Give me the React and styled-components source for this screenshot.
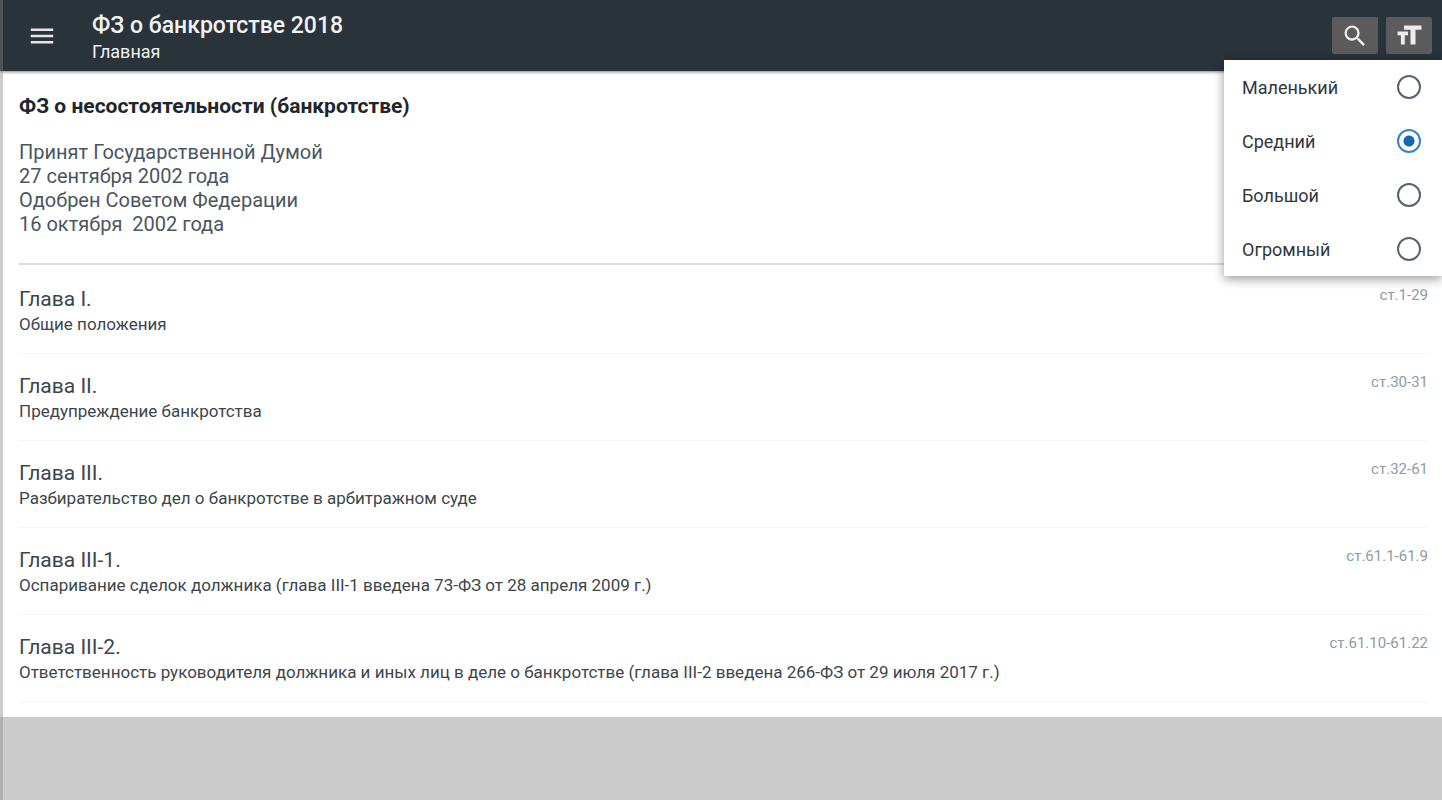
import React, { useState } from "react";
import styled, { createGlobalStyle } from "styled-components";
import { MdMenu, MdSearch } from "react-icons/md";

const GlobalStyle = createGlobalStyle`
  * {
    box-sizing: border-box;
  }
  body {
    margin: 0;
    background: #cbcbcb;
    font-family: Roboto, "Liberation Sans", sans-serif;
    color: #3d464b;
  }
`;

const Page = styled.div`
  position: relative;
  min-height: 100vh;
  &::before {
    content: "";
    position: absolute;
    z-index: 2;
    inset: 0 auto 0 0;
    width: 3px;
    background: rgba(130, 130, 130, 0.4);
  }
`;

const Header = styled.header`
  position: relative;
  z-index: 1;
  display: flex;
  align-items: center;
  height: 71px;
  padding: 0 10px 0 27px;
  background: #2a323a;
  color: #f2f2f2;
  box-shadow: 0 1px 3px rgba(0, 0, 0, 0.5);
`;

const MenuButton = styled.button`
  display: flex;
  padding: 0;
  margin-right: 35px;
  border: 0;
  background: none;
  color: #e6e6e6;
`;

const Titles = styled.div`
  flex: 1;
  padding-top: 4px;
`;

const Title = styled.h1`
  margin: 0;
  font-size: 23px;
  line-height: 28px;
  font-weight: 500;
`;

const Subtitle = styled.div`
  font-size: 18px;
  line-height: 24px;
`;

const Actions = styled.div`
  position: relative;
  display: flex;
  gap: 8px;
`;

const IconButton = styled.button`
  display: flex;
  align-items: center;
  justify-content: center;
  width: 46px;
  height: 37px;
  padding: 0;
  border: 0;
  border-radius: 2px;
  background: #5b5b5c;
  color: #ececec;
`;

const SizeMenu = styled.fieldset`
  position: absolute;
  top: 43px;
  right: -10px;
  width: 218px;
  margin: 0;
  padding: 0;
  border: 0;
  background: #fff;
  box-shadow: 0 3px 10px rgba(0, 0, 0, 0.4);
`;

const Option = styled.label`
  display: flex;
  align-items: center;
  justify-content: space-between;
  height: 54px;
  padding: 0 21px 0 18px;
  font-size: 18px;
  color: #30373b;
`;

const Radio = styled.input`
  appearance: none;
  width: 24px;
  height: 24px;
  margin: 0;
  border: 2px solid #58636a;
  border-radius: 50%;
  &:checked {
    border-color: #3a82c6;
    background: radial-gradient(circle, #1565b5 5px, #fff 6px);
  }
`;

const Content = styled.main`
  padding: 22px 14px 15px 19px;
  background: #fff;
`;

const DocTitle = styled.h2`
  margin: 0 0 21px;
  font-size: 21px;
  line-height: 26px;
  font-weight: 700;
  color: #20272b;
`;

const Intro = styled.p`
  margin: 0;
  padding-bottom: 27px;
  border-bottom: 2px solid #dcdcdc;
  font-size: 20px;
  line-height: 24px;
  white-space: pre-line;
  color: #4a565e;
`;

const Chapters = styled.ul`
  margin: 0;
  padding: 2px 0 0;
  list-style: none;
`;

const Chapter = styled.li`
  border-bottom: 1px solid #f4f4f4;
`;

const ChapterLink = styled.a`
  display: flex;
  justify-content: space-between;
  padding: 20px 0 17px;
  color: inherit;
  text-decoration: none;
`;

const ChapterName = styled.div`
  font-size: 21px;
  line-height: 25px;
`;

const ChapterText = styled.div`
  font-size: 17px;
  line-height: 24px;
`;

const Articles = styled.span`
  font-size: 15px;
  line-height: 16px;
  color: #8c9ba5;
`;

const sizes = ["Маленький", "Средний", "Большой", "Огромный"];

const chapters = [
  { name: "Глава I.", text: "Общие положения", articles: "ст.1-29" },
  { name: "Глава II.", text: "Предупреждение банкротства", articles: "ст.30-31" },
  {
    name: "Глава III.",
    text: "Разбирательство дел о банкротстве в арбитражном суде",
    articles: "ст.32-61",
  },
  {
    name: "Глава III-1.",
    text: "Оспаривание сделок должника (глава III-1 введена 73-ФЗ от 28 апреля 2009 г.)",
    articles: "ст.61.1-61.9",
  },
  {
    name: "Глава III-2.",
    text: "Ответственность руководителя должника и иных лиц в деле о банкротстве (глава III-2 введена 266-ФЗ от 29 июля 2017 г.)",
    articles: "ст.61.10-61.22",
  },
];

const TextSizeIcon = () => (
  <svg width="28" height="28" viewBox="0 0 28 28" fill="currentColor" aria-hidden="true">
    <path d="M9 3.5h17.5v4.3h-6v14.7h-5V7.8H9z" />
    <path d="M2.5 9.5h10.5v3.7h-3.2v9.3H5.9v-9.3H2.5z" />
  </svg>
);

const App = () => {
  const [size, setSize] = useState("Средний");

  return (
    <Page>
      <GlobalStyle />
      <Header>
        <MenuButton aria-label="Меню">
          <MdMenu size={30} />
        </MenuButton>
        <Titles>
          <Title>ФЗ о банкротстве 2018</Title>
          <Subtitle>Главная</Subtitle>
        </Titles>
        <Actions>
          <IconButton aria-label="Поиск">
            <MdSearch size={28} />
          </IconButton>
          <IconButton aria-label="Размер шрифта">
            <TextSizeIcon />
          </IconButton>
          <SizeMenu aria-label="Размер шрифта">
            {sizes.map((item) => (
              <Option key={item}>
                {item}
                <Radio
                  type="radio"
                  name="size"
                  checked={size === item}
                  onChange={() => setSize(item)}
                />
              </Option>
            ))}
          </SizeMenu>
        </Actions>
      </Header>
      <Content>
        <DocTitle>ФЗ о несостоятельности (банкротстве)</DocTitle>
        <Intro>
          {"Принят Государственной Думой\n27 сентября 2002 года\nОдобрен Советом Федерации\n16 октября \u00a02002 года"}
        </Intro>
        <Chapters>
          {chapters.map((chapter) => (
            <Chapter key={chapter.name}>
              <ChapterLink href="#">
                <div>
                  <ChapterName>{chapter.name}</ChapterName>
                  <ChapterText>{chapter.text}</ChapterText>
                </div>
                <Articles>{chapter.articles}</Articles>
              </ChapterLink>
            </Chapter>
          ))}
        </Chapters>
      </Content>
    </Page>
  );
};

export default App;
